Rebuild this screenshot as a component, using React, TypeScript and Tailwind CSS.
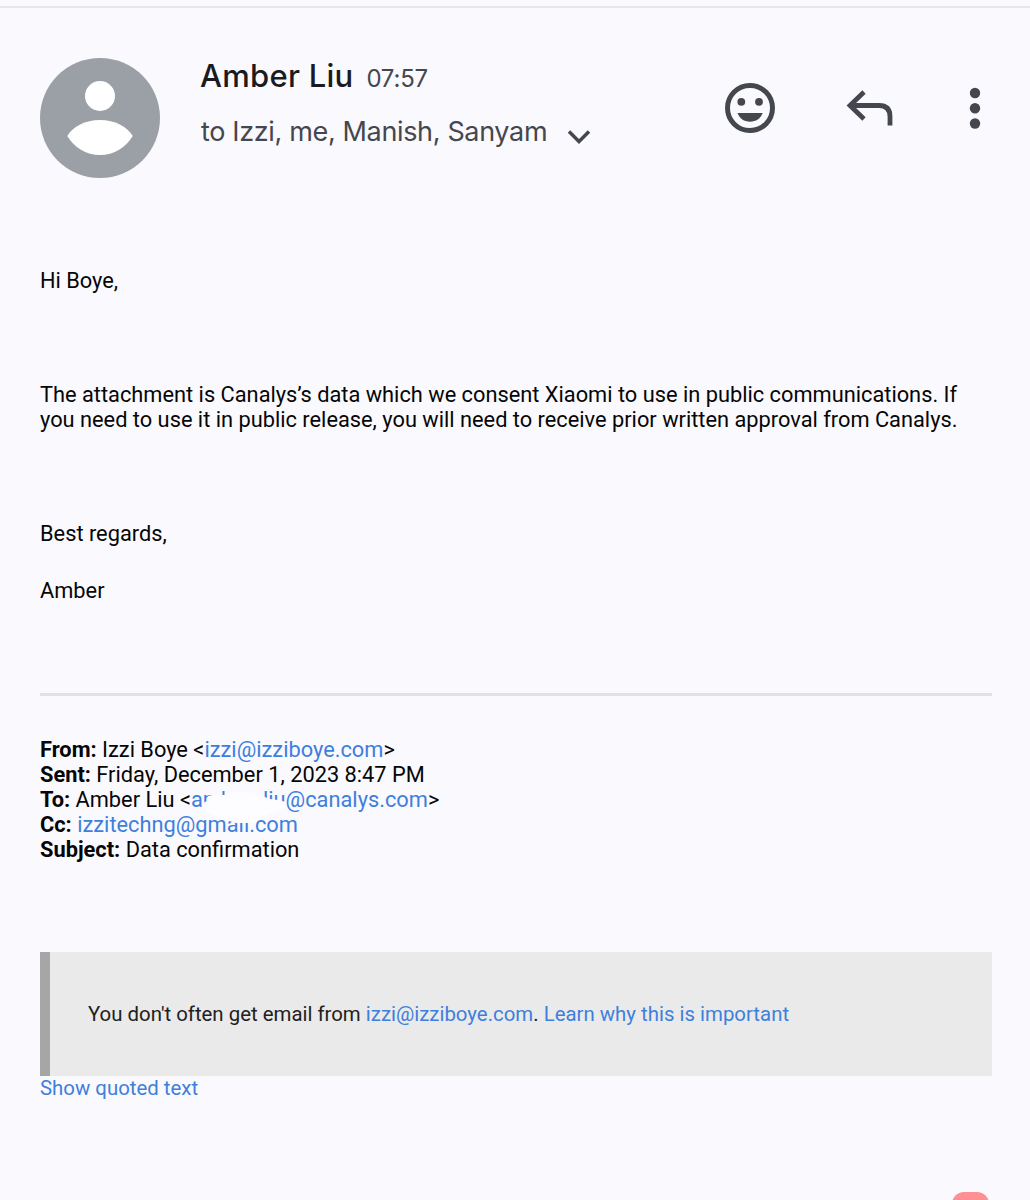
import type { ReactNode } from "react";

function Link({ children }: { children: ReactNode }) {
  return <a className="text-[#3f7fdc]">{children}</a>;
}

function Avatar() {
  return (
    <svg className="size-[120px] shrink-0" viewBox="0 0 120 120">
      <circle cx="60" cy="60" r="60" fill="#9aa0a6" />
      <circle cx="60" cy="38" r="15" fill="#fff" />
      <path d="M27.3 78C33 68.500 45 62 60 62S87 68.500 92.700 78C86 89.500 74 97 60 97S34 89.500 27.300 78Z" fill="#fff" />
    </svg>
  );
}

function Header() {
  return (
    <header className="flex h-[120px] font-[Inter,sans-serif] text-[#44474e]">
      <Avatar />
      <div className="ml-[41px] w-[400px] whitespace-nowrap">
        <div className="-mt-px flex h-[38px] items-baseline">
          <span className="-ml-px text-[31px] leading-[38px] font-medium tracking-[0.25px] text-[#1a1b20]">Amber Liu</span>
          <span className="ml-[13px] text-[24px] tracking-[-0.2px]">07:57</span>
        </div>
        <div className="mt-[18px] flex h-[38px] items-center">
          <span className="text-[27px] leading-[38px] tracking-[-0.35px]">to Izzi, me, Manish, Sanyam</span>
          <svg className="mt-[9px] ml-[20px] h-[16px] w-[24px] shrink-0" viewBox="0 0 24 16" fill="none" stroke="#44474e" strokeWidth="3.500">
            <path d="M2 2.500 12 12.500 22 2.500" />
          </svg>
        </div>
      </div>
      <div className="mt-[24px] mr-[6px] ml-auto flex h-[52px] w-[262px] shrink-0 justify-between">
        <svg className="h-[52px] w-[52px]" viewBox="0 0 52 52" fill="#44474e">
          <circle cx="26" cy="26" r="22.500" fill="none" stroke="#44474e" strokeWidth="5" />
          <circle cx="17.300" cy="19.800" r="3.900" />
          <circle cx="35" cy="19.800" r="3.900" />
          <path d="M13.500 31H38.700C36.500 36.500 32 39.700 26 39.700S15.700 36.500 13.500 31Z" />
        </svg>
        <svg className="h-[52px] w-[50px]" viewBox="0 0 50 52" fill="none" stroke="#44474e" strokeWidth="4.800">
          <path d="M19 10 5 23.500 19 37M5 23.500H34Q45 23.500 45 34.500V43.500" />
        </svg>
        <svg className="h-[52px] w-[22px]" viewBox="0 0 22 52" fill="#44474e">
          <circle cx="11" cy="11" r="5.200" />
          <circle cx="11" cy="26.300" r="5.200" />
          <circle cx="11" cy="41.500" r="5.200" />
        </svg>
      </div>
    </header>
  );
}

export default function App() {
  return (
    <div className="relative flex h-[1200px] w-[1030px] flex-col overflow-hidden bg-[#faf9fe] font-[Roboto,sans-serif] text-[21.8px] leading-[25px] text-[#060606]">
      <div className="mt-[6px] h-[2px] shrink-0 bg-[#e6e6ec]" />
      <main className="mt-[50px] ml-[40px] flex w-[951.500px] flex-col whitespace-nowrap">
        <Header />
        <p className="mt-[90px]">Hi Boye,</p>
        <p className="mt-[89px]">
          The attachment is Canalys’s data which we consent Xiaomi to use in public communications. If
          <br />
          you need to use it in public release, you will need to receive prior written approval from Canalys.
        </p>
        <p className="mt-[89px]">Best regards,</p>
        <p className="mt-[32px]">Amber</p>
        <hr className="mt-[90px] h-[3px] border-0 bg-[#e1e1e1]" />
        <div className="relative mt-[41px]">
          <p><b>From:</b> Izzi Boye &lt;<Link>izzi@izziboye.com</Link>&gt;</p>
          <p><b>Sent:</b> Friday, December 1, 2023 8:47 PM</p>
          <p>
            <b>To:</b> Amber Liu &lt;<Link>am<span className="inline-block w-[41px]" />liu@canalys.com</Link>&gt;
          </p>
          <p><b>Cc:</b> <Link>izzitechng@gmail.com</Link></p>
          <p><b>Subject:</b> Data confirmation</p>
          <svg className="absolute top-[50px] left-[160px] h-[50px] w-[100px]" viewBox="0 0 100 50">
            <path d="M8 9 24 6 50 5 62 9 70 12 78 13 86 15 85.500 21 74 25 62 30 54 36 36 36 22 32 8 25 3 21 3 16 7 14Z" fill="#fdfdff" />
            <path d="M23.500 4V8" stroke="#3f7fdc" strokeWidth="2" />
          </svg>
        </div>
        <div className="mt-[90px] flex h-[124px] items-center border-l-[10px] border-[#a6a6a6] bg-[#eaeaea] pl-[38px] text-[20.400px] text-[#212121]">
          <p>You don't often get email from <Link>izzi@izziboye.com</Link>. <Link>Learn why this is important</Link></p>
        </div>
        <p className="text-[20.400px]"><Link>Show quoted text</Link></p>
      </main>
      <div className="absolute top-[1192px] left-[952px] h-[30px] w-[37px] rounded-[12px] bg-[#ff8f92]" />
    </div>
  );
}
